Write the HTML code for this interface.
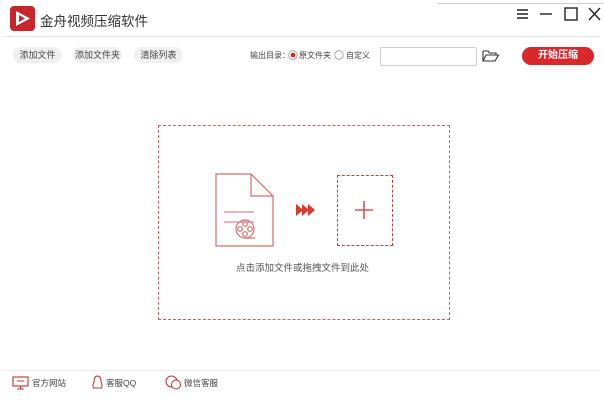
<!DOCTYPE html>
<html><head><meta charset="utf-8"><style>
body{margin:0;width:604px;height:401px;background:#fff;font-family:"Liberation Sans","Noto Sans CJK SC",sans-serif;position:relative;overflow:hidden;color:#333}
.a{position:absolute}
.btn{position:absolute;top:47px;height:16px;background:#f0f0f0;border-radius:8px;font-size:9px;line-height:16px;text-align:center;color:#444}
.t{font-size:9px;color:#444;white-space:nowrap}
</style></head><body>
<div class="a" style="left:438px;top:0;width:166px;height:3px;border-bottom:1px solid #ccc"></div>
<svg class="a" style="left:10px;top:6px" width="25" height="25"><rect width="25" height="25" rx="4" fill="#c8262a"/><path d="M6 5 L20 12.5 L6 20 Z" fill="#fff"/><path d="M9 9 L15 12.5 L9 16 Z" fill="#c8262a"/></svg>
<div class="a" style="left:40px;top:10px;font-size:13.5px;color:#333">金舟视频压缩软件</div>
<svg class="a" style="left:510px;top:6px" width="94" height="16" stroke="#222" stroke-width="1.4" fill="none"><path d="M7 4h11M7 8h11M7 12h11"/><path d="M30 8h12"/><rect x="55" y="2" width="12" height="12"/><path d="M79 2l11 12M90 2l-11 12"/></svg>
<div class="a" style="left:4px;top:36px;width:596px;height:1px;background:#e5e5e5"></div>
<div class="btn" style="left:13px;width:49px">添加文件</div>
<div class="btn" style="left:73px;width:49px">添加文件夹</div>
<div class="btn" style="left:134px;width:49px">清除列表</div>
<div class="a t" style="left:250px;top:50px;font-size:8px">输出目录：</div>
<svg class="a" style="left:288px;top:50px" width="10" height="10"><circle cx="5" cy="5" r="4.3" fill="#fff" stroke="#999" stroke-width=".8"/><circle cx="5" cy="5" r="2.3" fill="#e02020"/></svg>
<div class="a t" style="left:299px;top:50px;font-size:8px">原文件夹</div>
<svg class="a" style="left:334px;top:50px" width="10" height="10"><circle cx="5" cy="5" r="4.3" fill="#fff" stroke="#999" stroke-width=".8"/></svg>
<div class="a t" style="left:346px;top:50px;font-size:8px">自定义</div>
<div class="a" style="left:380px;top:47px;width:95px;height:17px;border:1px solid #ccc;border-radius:2px"></div>
<svg class="a" style="left:482px;top:49px" width="18" height="14" fill="none" stroke="#333" stroke-width="1.1"><path d="M1 2h5l1.5 2H14v2M1 2v10h12l3.5-6H4L1 12"/></svg>
<div class="a" style="left:522px;top:47px;width:72px;height:18px;background:#d9282b;border-radius:9px;color:#fff;font-size:10px;font-weight:bold;text-align:center;line-height:18px">开始压缩</div>
<div class="a" style="left:158px;top:125px;width:290px;height:193px;border:1px dashed #d06060"></div>
<svg class="a" style="left:214px;top:172px" width="62" height="76" fill="none" stroke="#d07070" stroke-width="1.2"><path d="M2 2h35l22 22v50H2z M37 2v22h22"/><path d="M10 40h30M10 50h30" stroke-width="1"/><circle cx="31" cy="57" r="9"/><circle cx="31" cy="52" r="2.3"/><circle cx="31" cy="62" r="2.3"/><circle cx="26" cy="57" r="2.3"/><circle cx="36" cy="57" r="2.3"/><path d="M31 66h10"/></svg>
<svg class="a" style="left:296px;top:204px" width="21" height="12" fill="#d83a30"><path d="M0 0l7 6-7 6zM6 0l7 6-7 6zM12 0l7 6-7 6z"/></svg>
<div class="a" style="left:337px;top:175px;width:54px;height:69px;border:1px dashed #c04040"></div>
<svg class="a" style="left:354px;top:200px" width="20" height="20" stroke="#d03030" stroke-width="1.3"><path d="M10 1v18M1 10h18"/></svg>
<div class="a t" style="left:236px;top:260px;font-size:9.5px;color:#555">点击添加文件或拖拽文件到此处</div>
<div class="a" style="left:4px;top:370px;width:596px;height:1px;background:#ececec"></div>
<svg class="a" style="left:12px;top:376px" width="17" height="14" fill="none" stroke="#c83030" stroke-width="1.1"><rect x="1" y="1" width="15" height="9"/><path d="M5 5h7M8.5 10v3M5 13h7"/></svg>
<div class="a t" style="left:32px;top:377px;font-size:8.5px">官方网站</div>
<svg class="a" style="left:92px;top:375px" width="11" height="15" fill="none" stroke="#c83030" stroke-width="1"><path d="M5.5 1C2.5 1 2 4 2 7c-1 2-1.5 4-.5 6h8c1-2 .5-4-.5-6 0-3-.5-6-3.5-6z"/></svg>
<div class="a t" style="left:106px;top:377px;font-size:8.5px">客服QQ</div>
<svg class="a" style="left:165px;top:375px" width="17" height="15" fill="none" stroke="#c83030" stroke-width="1"><circle cx="6.5" cy="6.5" r="5.5"/><circle cx="11" cy="9.5" r="4.5" fill="#fff"/></svg>
<div class="a t" style="left:184px;top:377px;font-size:8.5px">微信客服</div>
</body></html>
